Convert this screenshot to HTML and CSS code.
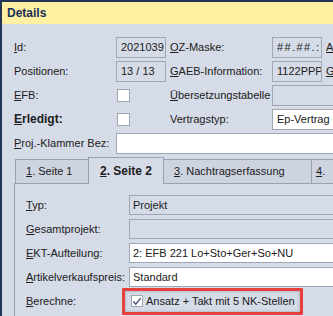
FILE: index.html
```html
<!DOCTYPE html>
<html lang="de">
<head>
    <meta charset="UTF-8">
    <title>Details</title>
    <link rel="stylesheet" href="styles.css">
</head>
<body>
    <div class="window">
        <div class="caption">Details</div>

        <div class="head-grid">
            <div class="lbl"><u>I</u>d:</div>
            <div class="field ro">2021039</div>
            <div class="lbl"><u>O</u>Z-Maske:</div>
            <div class="field ro spaced">##.##.:</div>
            <div class="lbl"><u>A</u></div>

            <div class="lbl">Positionen:</div>
            <div class="field ro">13 / 13</div>
            <div class="lbl"><u>G</u>AEB-Information:</div>
            <div class="field ro">1122PPP</div>
            <div class="lbl"><u>G</u></div>

            <div class="lbl"><u>E</u>FB:</div>
            <div class="cell"><span class="check"></span></div>
            <div class="lbl"><u>Ü</u>bersetzungstabelle</div>
            <div class="field ro wide"></div>

            <div class="lbl bold"><u>E</u>rledigt:</div>
            <div class="cell"><span class="check"></span></div>
            <div class="lbl">Vertragstyp:</div>
            <div class="field wide">Ep-Vertrag</div>

            <div class="lbl"><u>P</u>roj.-Klammer Bez:</div>
            <div class="field full"></div>
        </div>

        <div class="tabset">
            <div class="tabs">
                <div class="tab tab-1"><u>1</u>. Seite 1</div>
                <div class="tab tab-2 active"><u>2</u>. Seite 2</div>
                <div class="tab tab-3"><u>3</u>. Nachtragserfassung</div>
                <div class="tab tab-4"><u>4</u>.</div>
            </div>

            <div class="panel">
                <div class="lbl"><u>T</u>yp:</div>
                <div class="field ro">Projekt</div>

                <div class="lbl"><u>G</u>esamtprojekt:</div>
                <div class="field ro"></div>

                <div class="lbl"><u>E</u>KT-Aufteilung:</div>
                <div class="field">2: EFB 221 Lo+Sto+Ger+So+NU</div>

                <div class="lbl"><u>A</u>rtikelverkaufspreis:</div>
                <div class="field">Standard</div>

                <div class="lbl"><u>B</u>erechne:</div>
                <div class="cell">
                    <div class="mark">
                        <span class="check">
                            <svg width="11" height="11" viewBox="0 0 11 11">
                                <polyline points="1.5,5.5 4.2,8.5 9.5,1.8" fill="none" stroke="#46577a" stroke-width="1.6"/>
                            </svg>
                        </span>
                        <span>Ansatz + Takt mit 5 NK-Stellen</span>
                    </div>
                </div>
            </div>
        </div>
    </div>
</body>
</html>
```

FILE: styles.css
```css
* {
    margin: 0;
    padding: 0;
    box-sizing: border-box;
}

html, body {
    overflow: hidden;
}

body {
    background-color: #d5dbe7;
    font-family: "Liberation Sans", Arial, sans-serif;
    font-size: 11px;
    color: #202020;
}

.window {
    width: 440px;
    height: 316px;
    border-top: 2px solid #243655;
    border-left: 2px solid #243655;
}

.caption {
    height: 22px;
    line-height: 22px;
    padding-left: 5px;
    background: #ffefa1;
    color: #16305a;
    font-size: 12px;
    font-weight: bold;
}

.head-grid {
    display: grid;
    grid-template-columns: 102px 54px 102px 54px 1fr;
    grid-auto-rows: 24px;
    margin: 11px 0 0 12px;
    align-items: center;
}

.lbl {
    white-space: nowrap;
}

.bold {
    font-weight: bold;
    font-size: 12px;
}

.cell {
    display: flex;
    align-items: center;
}

.field {
    height: 21px;
    line-height: 19px;
    padding: 0 4px;
    border: 1px solid #9fa7b4;
    background: #fff;
    white-space: nowrap;
    overflow: hidden;
}

.field.spaced {
    letter-spacing: 1.4px;
}

.head-grid .field {
    width: 50px;
}

.head-grid .field.wide {
    grid-column: 4 / 6;
    width: auto;
}

.head-grid .field.full {
    grid-column: 2 / 6;
    width: auto;
}

.field.ro {
    background: #d5dbe7;
}

.check {
    display: flex;
    align-items: center;
    justify-content: center;
    width: 13px;
    height: 13px;
    margin-left: 1px;
    background: #fff;
    border: 1px solid #9fa7b4;
}

.tabset {
    margin: 2px 0 0 12px;
}

.tabs {
    display: flex;
    align-items: flex-end;
    height: 27px;
    padding-left: 1px;
    border-bottom: 1px solid #9aa2b0;
}

.tab {
    height: 24px;
    line-height: 23px;
    padding-left: 10px;
    margin-left: -1px;
    border: 1px solid #9aa2b0;
    border-bottom: none;
    background: #cdd4e0;
    white-space: nowrap;
}

.tab-1 {
    margin-left: 0;
    width: 74px;
}

.tab-2 {
    width: 76px;
    padding-left: 11px;
}

.tab-3 {
    width: 149px;
}

.tab-4 {
    width: 60px;
    padding-left: 4px;
}

.tab.active {
    height: 27px;
    line-height: 27px;
    margin-bottom: -1px;
    background: #d5dbe7;
    font-weight: bold;
    font-size: 12px;
    position: relative;
}

.panel {
    display: grid;
    grid-template-columns: 103px 1fr;
    grid-auto-rows: 24px;
    align-items: center;
    padding: 9px 0 0 11px;
    height: 140px;
    border-left: 1px solid #9aa2b0;
}

.panel .field {
    height: 20px;
    line-height: 18px;
    padding: 0 3px;
}

.mark {
    display: flex;
    align-items: center;
    gap: 3px;
    width: 181px;
    height: 27px;
    margin-left: -7px;
    padding-left: 6px;
    border: 3px solid #e8403d;
    border-radius: 1px;
    box-shadow: inset 0 0 3px rgba(110, 120, 140, 0.6);
}

.mark .check {
    margin-left: 0;
    width: 12px;
    height: 12px;
}
```
